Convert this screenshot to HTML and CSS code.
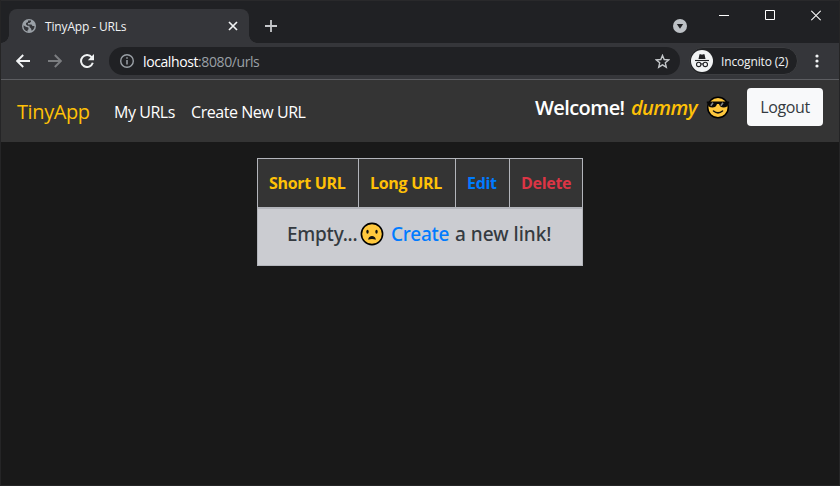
FILE: index.html
```html
<!DOCTYPE html>
<html lang="en">
<head>
<meta charset="utf-8">
<title>TinyApp - URLs</title>
<link rel="stylesheet" href="styles.css">
</head>
<body>
<div class="window">
  <header class="tabstrip">
    <div class="tab">
      <svg class="globe" width="14" height="14" viewBox="0 0 14 14"><circle cx="7" cy="7" r="7" fill="#9aa0a6"/><path d="M1.5 6.2 4.2 8c1 .2 2.2.1 2.3 1.200v1l-1 1.100.2 1.300C2.800 12 1.200 9.500 1.500 6.200zM6 1.600 9 1.500v1.300L7.500 4H6v1.500h3.500l1 1.500h2c0 2.500-1.300 4-2.800 4.800L9 9.500 7.500 8V6.800H5.300L4 5.500V4L6 3z" fill="#35363a"/></svg>
      <span class="tab-title">TinyApp - URLs</span>
      <svg class="tab-close" width="10" height="10" viewBox="0 0 10 10"><path d="m1 1 8 8m0-8-8 8" stroke="#f1f3f4" stroke-width="1.700"/></svg>
    </div>
    <svg class="plus" width="12" height="12" viewBox="0 0 12 12"><path d="M6 0v12M0 6h12" stroke="#c6c8cb" stroke-width="1.800"/></svg>
    <svg class="chevron" width="14" height="14" viewBox="0 0 14 14"><circle cx="7" cy="7" r="7" fill="#bdc1c6"/><path d="M3.800 5h6.400L7 9.800z" fill="#202124"/></svg>
    <div class="controls">
      <svg width="10" height="11" viewBox="0 0 10 11"><path d="M0 5.500h10" stroke="#fff"/></svg>
      <svg width="10" height="11" viewBox="0 0 10 11"><path d="M.5 .5h9v9h-9z" fill="none" stroke="#fff"/></svg>
      <svg width="10" height="11" viewBox="0 0 10 11"><path d="m.3.800 9.400 9.400m0-9.400L.3 10.200" stroke="#fff" stroke-width="1.100"/></svg>
    </div>
  </header>
  <div class="toolbar">
    <svg class="back" width="14" height="14" viewBox="0 0 14 14"><path d="M14 7H1.500M7.200 1 1.200 7l6 6" fill="none" stroke="#f1f3f4" stroke-width="1.900"/></svg>
    <svg class="forward" width="14" height="14" viewBox="0 0 14 14"><path d="M0 7h12.500M6.800 1l6 6-6 6" fill="none" stroke="#7b7d80" stroke-width="1.900"/></svg>
    <svg class="reload" width="14" height="14" viewBox="0 0 14 14"><path d="M11.800 3.300A6 6 0 1 0 12.800 8.800" fill="none" stroke="#f1f3f4" stroke-width="2"/><path d="M14 0v6.200H7.800z" fill="#f1f3f4"/></svg>
    <div class="omnibox">
      <svg width="14" height="14" viewBox="0 0 14 14"><circle cx="7" cy="7" r="6.300" fill="none" stroke="#9aa0a6" stroke-width="1.400"/><path d="M7 3.200v1.600M7 6v4.600" stroke="#9aa0a6" stroke-width="1.500"/></svg>
      <span class="address"><b>localhost</b>:8080/urls</span>
      <svg class="star" width="15" height="15" viewBox="0 0 15 15"><path d="m7.500 1.400 1.700 4.100 4.500.4-3.400 2.900 1 4.400-3.800-2.300-3.800 2.300 1-4.400-3.400-2.900 4.500-.4z" fill="none" stroke="#c4c7ca" stroke-width="1.400"/></svg>
    </div>
    <div class="profile">
      <svg width="22" height="22" viewBox="0 0 22 22"><circle cx="11" cy="11" r="11" fill="#f1f3f4"/><path d="M7.500 9 8.500 4.300h1.300l1.200.4 1.200-.4h1.300L14.500 9z" fill="#202124"/><path d="M4 10.500h14" stroke="#202124" stroke-width="1.100"/><g fill="none" stroke="#202124" stroke-width="1.100"><circle cx="7.700" cy="14.400" r="2.200"/><circle cx="14.300" cy="14.400" r="2.200"/><path d="M9.900 14.200q1.100-.8 2.200 0"/></g></svg>
      <span>Incognito (2)</span>
    </div>
    <svg class="dots" width="4" height="14" viewBox="0 0 4 14"><g fill="#f1f3f4"><circle cx="2" cy="2" r="1.600"/><circle cx="2" cy="7" r="1.600"/><circle cx="2" cy="12" r="1.600"/></g></svg>
  </div>
  <nav class="navbar">
    <a class="brand">TinyApp</a>
    <a class="link my-urls">My URLs</a>
    <a class="link create-url">Create New URL</a>
    <div class="welcome"><span class="hello">Welcome!</span><em>dummy</em>
      <svg width="24" height="24" viewBox="0 0 24 24"><circle cx="12" cy="12.500" r="10.300" fill="#ffc83d" stroke="#000" stroke-width="1.500"/><path d="M.8 6.400h22.400v1.800l-1.200.6c-.3 2.800-1.800 3.700-4.300 3.700-2.600 0-4-1-4.700-3.500h-2c-.7 2.500-2.100 3.500-4.700 3.500S2.300 11.600 2 8.800L.8 8.200z" fill="#080808"/><path d="m4.800 10.800 2.200-3m7.800 3 2.200-3" stroke="#858585" stroke-width="1.500"/><path d="M7.500 16q4.500 3.800 9 0" fill="none" stroke="#111" stroke-width="1.500" stroke-linecap="round"/></svg>
    </div>
    <button class="logout"><span>Logout</span></button>
  </nav>
  <main>
    <table>
      <thead><tr><th class="c1"><span>Short URL</span></th><th class="c2"><span>Long URL</span></th><th class="c3"><span>Edit</span></th><th class="c4"><span>Delete</span></th></tr></thead>
      <tbody><tr><td colspan="4"><div class="empty"><span class="e1">Empty...</span><svg width="24" height="24" viewBox="0 0 24 24"><circle cx="12" cy="12" r="10.600" fill="#ffc83d" stroke="#000" stroke-width="1.600"/><ellipse cx="7.500" cy="9.800" rx="1.200" ry="2" fill="#111"/><ellipse cx="16.500" cy="9.800" rx="1.200" ry="2" fill="#111"/><path d="M8.200 17.700c.2-4.800 7.400-4.800 7.600 0q-3.800-1.200-7.600 0z" fill="#111"/></svg><a class="e2">Create</a><span class="e3">a new link!</span></div></td></tr></tbody>
    </table>
  </main>
</div>
</body>
</html>
```
FILE: styles.css
```css
* { box-sizing: border-box; }
body { margin: 0; background: #252526; font-family: "Open Sans", "Noto Sans", sans-serif; }
svg { display: block; flex: none; }
span, a, em { white-space: nowrap; }
.window { width: 838px; height: 485px; margin-left: 1px; background: #191919; display: flex; flex-direction: column; }
.tabstrip { height: 43px; background: #202124; border-top: 1px solid #29292b; display: flex; align-items: flex-start; }
.tab { width: 240px; height: 34px; margin: 8px 0 0 8px; padding: 0 11px 0 13px; background: #35363a; border-radius: 8px 8px 0 0; display: flex; align-items: center; position: relative; }
.tab::before, .tab::after { content: ""; position: absolute; bottom: 0; width: 8px; height: 8px; }
.tab::before { right: 100%; background: radial-gradient(circle at 0 0, #202124 7.5px, #35363a 8px); }
.tab::after { left: 100%; background: radial-gradient(circle at 100% 0, #202124 7.500px, #35363a 8px); }
.tab-title { margin-left: 9px; font-size: 12px; letter-spacing: -.15px; color: #f1f3f4; }
.tab-close { margin-left: auto; }
.plus { margin: 19px 0 0 16px; }
.chevron { margin: 18px 0 0 auto; }
.controls { display: flex; gap: 36px; margin: 9px 18px 0 32px; }
.toolbar { height: 37px; background: #35363a; border-bottom: 1px solid #5c5d61; display: flex; align-items: center; padding-left: 15px; }
.forward { margin-left: 18px; }
.reload { margin-left: 18px; }
.omnibox { width: 571px; height: 28px; margin-left: 15px; padding: 0 10px 0 11px; background: #202124; border-radius: 14px; display: flex; align-items: center; }
.address { margin-left: 9px; font-size: 14px; letter-spacing: -.4px; color: #9aa0a6; }
.address b { font-weight: 400; color: #fff; }
.star { margin-left: auto; }
.profile { width: 109px; height: 28px; margin-left: 9px; padding-left: 1px; background: #202124; border: 1px solid #3c3d40; border-radius: 14px; display: flex; align-items: center; color: #f1f3f4; font-size: 12px; letter-spacing: -.15px; }
.profile span { margin-left: 8px; }
.dots { margin-left: 17px; }
.navbar { height: 62px; background: #343434; display: flex; align-items: center; padding: 0 16px; color: #fff; }
.brand { width: 97px; font-size: 20px; letter-spacing: -.4px; color: #ffc107; }
.link { padding-top: 1px; font-size: 16px; letter-spacing: -.45px; }
.my-urls { width: 77px; }
.welcome { margin-left: auto; margin-bottom: 8px; display: flex; align-items: center; font-size: 20px; font-weight: 600; letter-spacing: -.6px; }
.hello { width: 96px; }
.welcome em { width: 75px; color: #ffc107; }
.welcome svg { margin-left: 0; }
.logout { width: 76px; height: 38px; margin: 0 0 8px 17px; padding: 0; border: 0; border-radius: 4px; background: #f8f9fa; color: #343a40; font: 16px "Open Sans", sans-serif; letter-spacing: -.4px; }
main { padding-top: 16px; }
table { width: 326px; margin: 0 0 0 256px; border-collapse: collapse; table-layout: fixed; }
th { height: 49px; padding: 0 0 0 11px; border: 1px solid #b3b5bb; border-bottom-width: 2px; background: #343434; color: #ffc107; text-align: left; font-size: 16px; font-weight: 700; letter-spacing: -.3px; }
.c1 { width: 101px; }
.c2 { width: 97px; }
.c3 { width: 54px; color: #007bff; }
.c4 { width: 73px; color: #dc3545; }
td { height: 58px; padding: 0 0 6px 29px; background: #cbccd1; border: 1px solid #b3b5bb; color: #343a40; font-family: "Noto Sans", "Open Sans", sans-serif; font-size: 19px; letter-spacing: -.25px; }
.empty { display: flex; align-items: center; font-weight: 500; }
.e1 { width: 73px; }
.e2 { width: 64px; margin-left: 7px; color: #007bff; }
.e3 { letter-spacing: 0; }
```
